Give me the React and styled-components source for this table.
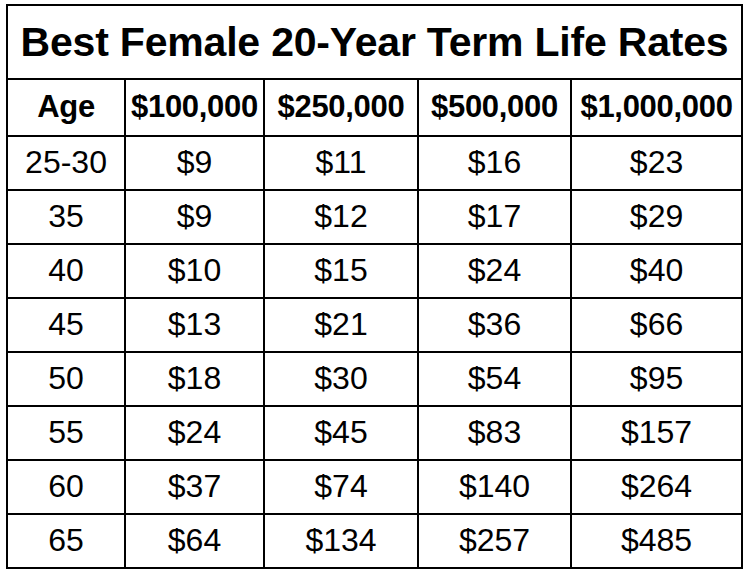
import React from 'react';
import styled, { createGlobalStyle } from 'styled-components';

const GlobalStyle = createGlobalStyle`
  html, body {
    margin: 0;
    padding: 0;
    background: #fff;
  }
  body {
    font-family: "Liberation Sans", Arial, sans-serif;
    color: #000;
  }
`;

const Page = styled.div`
  width: 748px;
  height: 578px;
  padding: 4px 0 0 6px;
  box-sizing: border-box;
`;

const Table = styled.table`
  border: 1px solid #000;
  border-spacing: 0;
  border-collapse: separate;
  table-layout: fixed;
  width: 737px;
`;

const TitleCell = styled.th`
  border: 1px solid #000;
  height: 72px;
  padding: 0;
  font-size: 41px;
  line-height: 1;
  font-weight: bold;
  letter-spacing: -0.2px;
  text-align: center;
  vertical-align: middle;
  white-space: nowrap;
`;

const HeadCell = styled.th`
  border: 1px solid #000;
  height: 53px;
  padding: 0 0 2px;
  font-size: 31px;
  line-height: 1;
  font-weight: bold;
  letter-spacing: -0.3px;
  text-align: center;
  white-space: nowrap;
`;

const Cell = styled.td`
  border: 1px solid #000;
  height: 50px;
  padding: 0 0 2px;
  font-size: 32px;
  line-height: 1;
  text-align: center;
`;

const cols = [118, 139, 154, 153, 171];
const heads = ['Age', '$100,000', '$250,000', '$500,000', '$1,000,000'];
const rows = [
  ['25-30', '$9', '$11', '$16', '$23'],
  ['35', '$9', '$12', '$17', '$29'],
  ['40', '$10', '$15', '$24', '$40'],
  ['45', '$13', '$21', '$36', '$66'],
  ['50', '$18', '$30', '$54', '$95'],
  ['55', '$24', '$45', '$83', '$157'],
  ['60', '$37', '$74', '$140', '$264'],
  ['65', '$64', '$134', '$257', '$485'],
];

export default function App() {
  return (
    <Page>
      <GlobalStyle />
      <Table>
        <colgroup>
          {cols.map((w, i) => <col key={i} width={w} />)}
        </colgroup>
        <thead>
          <tr>
            <TitleCell colSpan={5}>Best Female 20-Year Term Life Rates</TitleCell>
          </tr>
          <tr>
            {heads.map((h) => <HeadCell key={h}>{h}</HeadCell>)}
          </tr>
        </thead>
        <tbody>
          {rows.map((r) => (
            <tr key={r[0]}>
              {r.map((v, i) => <Cell key={i}>{v}</Cell>)}
            </tr>
          ))}
        </tbody>
      </Table>
    </Page>
  );
}
